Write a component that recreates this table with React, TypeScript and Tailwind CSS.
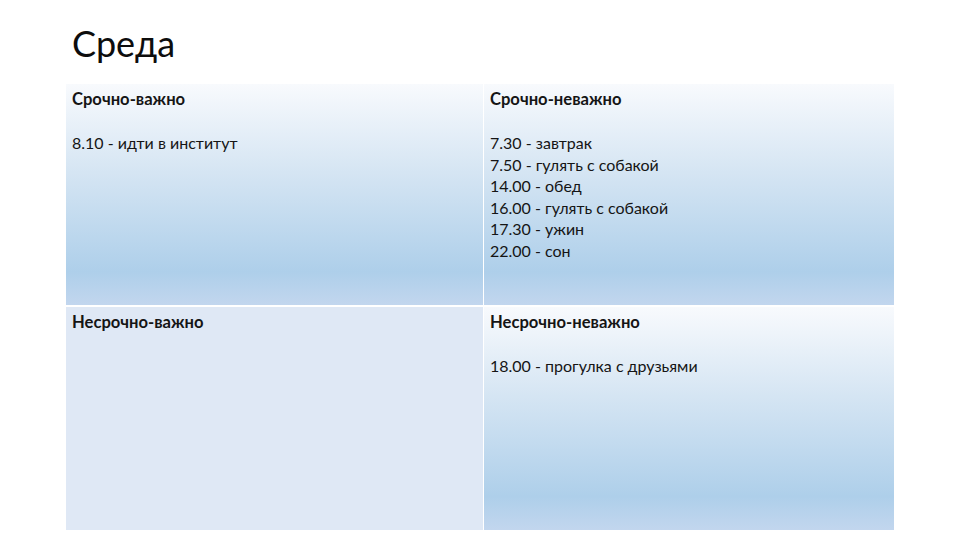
const grad =
  "bg-[linear-gradient(to_bottom,#f8fafd_0%,#d5e5f3_40%,#aecfea_85%,#c2d6ee_100%)]";

function Cell({
  title,
  items,
  className,
}: {
  title: string;
  items: string[];
  className: string;
}) {
  return (
    <div className={`px-[6px] pt-[5px] text-[16px] leading-[21.5px] text-[#151515] ${className}`}>
      <div className="font-bold text-[16.6px]">{title}</div>
      {items.length > 0 && (
        <div className="mt-[21.5px]">
          {items.map((it) => (
            <div key={it}>{it}</div>
          ))}
        </div>
      )}
    </div>
  );
}

export default function App() {
  return (
    <div
      className="w-[960px] h-[540px] bg-white overflow-hidden"
      style={{ fontFamily: "Lato, 'Noto Sans', sans-serif" }}
    >
      <h1 className="pl-[72px] pt-[21px] text-[36px] leading-[45px] text-[#0d0d0d]">Среда</h1>
      <div className="ml-[66px] mt-[18px] grid grid-cols-[417px_410px] grid-rows-[221px_223px] gap-x-[1px] gap-y-[2px] w-[828px]">
        <Cell title="Срочно-важно" items={["8.10 - идти в институт"]} className={grad} />
        <Cell
          title="Срочно-неважно"
          items={[
            "7.30 - завтрак",
            "7.50 - гулять с собакой",
            "14.00 - обед",
            "16.00 - гулять с собакой",
            "17.30 - ужин",
            "22.00 - сон",
          ]}
          className={grad}
        />
        <Cell title="Несрочно-важно" items={[]} className="bg-[#dfe8f5]" />
        <Cell
          title="Несрочно-неважно"
          items={["18.00 - прогулка с друзьями"]}
          className={grad}
        />
      </div>
    </div>
  );
}
